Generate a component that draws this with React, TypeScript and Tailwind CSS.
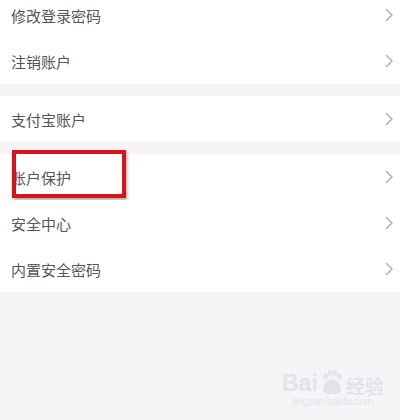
const groups = [
  ['修改登录密码', '注销账户'],
  ['支付宝账户'],
  ['账户保护', '安全中心', '内置安全密码'],
]

function Chevron() {
  return (
    <svg width="9" height="14" viewBox="0 0 9 14" fill="none" stroke="#b3b3b3" strokeWidth="1.6" strokeLinecap="round" strokeLinejoin="round">
      <polyline points="1.5,1.5 7,7 1.5,12.5" />
    </svg>
  )
}

function Row({ label, marked }: { label: string; marked?: boolean }) {
  return (
    <div className="relative flex h-[46px] items-center justify-between bg-white pl-[11px] pr-[6px]">
      <span className="text-[15px] leading-none text-[#555]">{label}</span>
      <Chevron />
      {marked && (
        <div className="absolute left-[12px] top-[-4px] h-[48px] w-[114px] border-[4px] border-[#d7141a] shadow-[1px_2px_3px_rgba(0,0,0,0.35)]" />
      )}
    </div>
  )
}

export default function App() {
  return (
    <div
      className="relative h-[420px] w-[400px] overflow-hidden bg-[#f7f4f8]"
      style={{ fontFamily: '"Noto Sans CJK SC", "Noto Sans", sans-serif' }}
    >
      <div className="-mt-[8px] flex flex-col gap-[12px]">
        {groups.map((g, i) => (
          <div key={i} className="flex flex-col">
            {g.map((label) => (
              <Row key={label} label={label} marked={label === '账户保护'} />
            ))}
          </div>
        ))}
      </div>

      <div className="absolute left-[282px] top-[369px] flex flex-col items-center text-[#e6e2e9]">
        <div className="flex items-end gap-[2px]">
          <span className="text-[23px] font-bold leading-none" style={{ fontFamily: '"Liberation Sans", sans-serif' }}>
            Bai
          </span>
          <svg width="24" height="26" viewBox="0 0 26 28" fill="currentColor">
            <ellipse cx="6" cy="8" rx="2.6" ry="3.2" />
            <ellipse cx="11" cy="4" rx="2.6" ry="3.2" />
            <ellipse cx="16" cy="4" rx="2.6" ry="3.2" />
            <ellipse cx="21" cy="8" rx="2.6" ry="3.2" />
            <path d="M13 11c-5 0-10 7-10 11 0 4 4 5 10 5s10-1 10-5c0-4-5-11-10-11z" />
          </svg>
          <span className="text-[19px] font-bold leading-none">经验</span>
        </div>
        <span className="mt-[2px] text-[10px] leading-none" style={{ fontFamily: '"Liberation Sans", sans-serif' }}>
          jingyan.baidu.com
        </span>
      </div>
    </div>
  )
}
